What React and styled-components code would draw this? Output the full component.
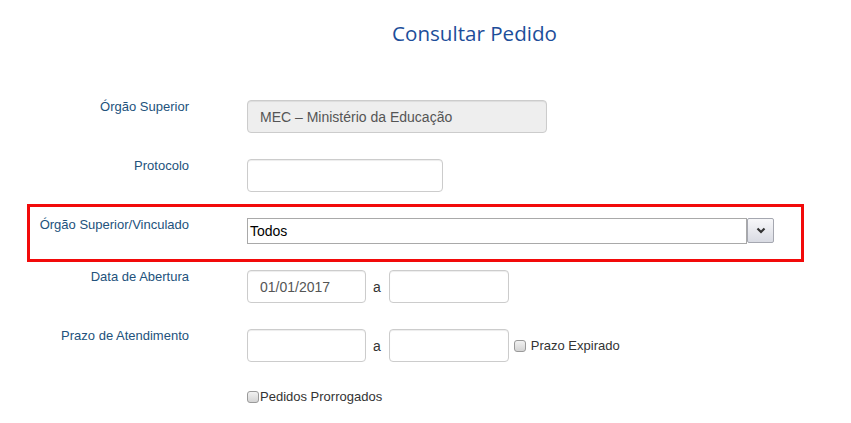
import React from "react";
import styled, { createGlobalStyle } from "styled-components";

const GlobalStyle = createGlobalStyle`
  body {
    margin: 0;
    background: #ffffff;
    font-family: "Liberation Sans", Arial, sans-serif;
  }
`;

const Page = styled.main`
  width: 851px;
  height: 423px;
  overflow: hidden;
`;

const Title = styled.h1`
  margin: 19px 0 0;
  padding-left: 98px;
  font-family: "Open Sans", sans-serif;
  font-weight: 400;
  font-size: 20.6px;
  line-height: 28px;
  text-align: center;
  color: #1d4e9a;
`;

const Form = styled.form`
  display: flex;
  flex-direction: column;
  margin-top: 53px;
`;

const Row = styled.div`
  display: grid;
  grid-template-columns: 189px 1fr;
  column-gap: 58px;
  align-items: start;
  margin-top: ${(p) => p.$space ?? 26}px;
  &:first-child {
    margin-top: 0;
  }
`;

const Highlight = styled(Row)`
  grid-template-columns: 159px 1fr;
  margin: 12px 47px 0 27px;
  padding: 11px 0 15px;
  border: 3px solid #f20a0a;
`;

const Label = styled.label`
  font-size: 13px;
  line-height: 13px;
  text-align: right;
  color: #23527c;
`;

const Field = styled.div`
  display: flex;
  align-items: center;
`;

const Input = styled.input`
  box-sizing: border-box;
  width: ${(p) => p.$width}px;
  height: 33px;
  margin: 0;
  padding: 0 12px;
  border: 1px solid #cccccc;
  border-radius: 4px;
  background: ${(p) => (p.disabled ? "#eeeeee" : "#ffffff")};
  box-shadow: inset 0 1px 1px rgba(0, 0, 0, 0.075);
  font-family: "Liberation Sans", Arial, sans-serif;
  font-size: 14px;
  color: #555555;
  outline: none;
`;

const Select = styled.div`
  display: flex;
  align-items: stretch;
  height: 26px;
`;

const SelectValue = styled.div`
  box-sizing: border-box;
  width: 500px;
  padding: 0 2px;
  border: 1px solid #a9a9a9;
  font-size: 14px;
  line-height: 24px;
  color: #000000;
`;

const SelectButton = styled.div`
  box-sizing: border-box;
  width: 27px;
  height: 25px;
  display: flex;
  align-items: center;
  justify-content: center;
  border: 1px solid #a5a7b0;
  border-radius: 2px;
  background: linear-gradient(#f7f7f9, #d9dbe3);
`;

const Separator = styled.span`
  margin: 0 8px 0 7px;
  font-size: 14px;
  color: #333333;
`;

const CheckLabel = styled.label`
  display: flex;
  align-items: center;
  gap: ${(p) => p.$gap}px;
  margin-left: ${(p) => p.$offset}px;
  font-size: 13px;
  line-height: 18px;
  color: #333333;
`;

const Check = styled.span`
  box-sizing: border-box;
  width: 12px;
  height: 12px;
  border: 1px solid #9a9a9a;
  border-radius: 3px;
  background: linear-gradient(#f2f2f2, #d4d4d4);
`;

export default function App() {
  return (
    <Page>
      <GlobalStyle />
      <Title>Consultar Pedido</Title>
      <Form>
        <Row>
          <Label>Órgão Superior</Label>
          <Field>
            <Input $width={300} disabled value="MEC – Ministério da Educação" readOnly />
          </Field>
        </Row>
        <Row>
          <Label>Protocolo</Label>
          <Field>
            <Input $width={196} />
          </Field>
        </Row>
        <Highlight>
          <Label>Órgão Superior/Vinculado</Label>
          <Field>
            <Select>
              <SelectValue>Todos</SelectValue>
              <SelectButton>
                <svg width="10" height="7" viewBox="0 0 10 7">
                  <path d="M1.5 1.5 L5 5 L8.5 1.5" fill="none" stroke="#333" strokeWidth="2.2" />
                </svg>
              </SelectButton>
            </Select>
          </Field>
        </Highlight>
        <Row $space={8}>
          <Label>Data de Abertura</Label>
          <Field>
            <Input $width={119} value="01/01/2017" readOnly />
            <Separator>a</Separator>
            <Input $width={120} />
          </Field>
        </Row>
        <Row>
          <Label>Prazo de Atendimento</Label>
          <Field>
            <Input $width={119} />
            <Separator>a</Separator>
            <Input $width={120} />
            <CheckLabel $gap={5} $offset={5}>
              <Check />
              Prazo Expirado
            </CheckLabel>
          </Field>
        </Row>
        <Row>
          <span />
          <CheckLabel $gap={1} $offset={0}>
            <Check />
            Pedidos Prorrogados
          </CheckLabel>
        </Row>
      </Form>
    </Page>
  );
}
